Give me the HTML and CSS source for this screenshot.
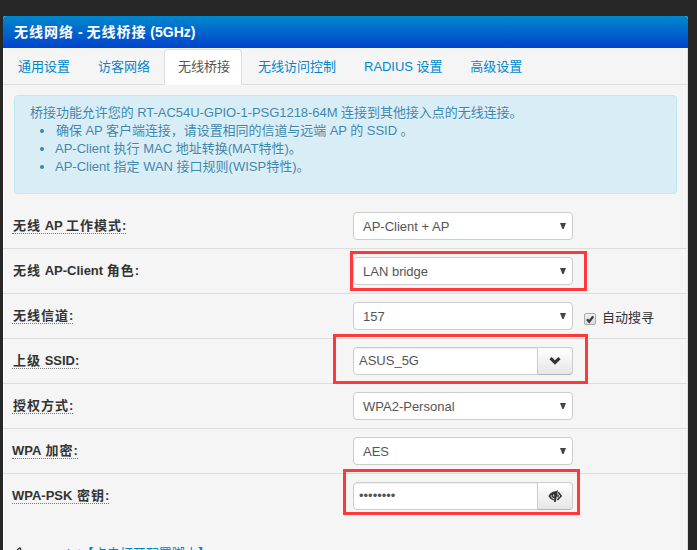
FILE: index.html
```html
<!DOCTYPE html>
<html lang="zh-CN">
<head>
<meta charset="utf-8">
<title>无线网络 - 无线桥接 (5GHz)</title>
<link rel="stylesheet" href="styles.css">
</head>
<body>
<div class="panel">
  <h1 class="title"><span class="cjk">无线网络</span> - <span class="cjk">无线桥接</span> (5GHz)</h1>
  <nav class="tabs">
    <a class="tab">通用设置</a>
    <a class="tab">访客网络</a>
    <a class="tab active">无线桥接</a>
    <a class="tab">无线访问控制</a>
    <a class="tab latin">RADIUS 设置</a>
    <a class="tab">高级设置</a>
  </nav>
  <div class="info">
    <div class="lead">桥接功能允许您的 RT-AC54U-GPIO-1-PSG1218-64M 连接到其他接入点的无线连接。</div>
    <ul>
      <li class="nudge">确保 AP 客户端连接，请设置相同的信道与远端 AP 的 SSID 。</li>
      <li>AP-Client 执行 MAC 地址转换(MAT特性)。</li>
      <li>AP-Client 指定 WAN 接口规则(WISP特性)。</li>
    </ul>
  </div>
  <div class="rows">
    <div class="row">
      <div class="name"><span class="hint"><span class="cjk">无线</span> AP <span class="cjk">工作模式</span>:</span></div>
      <div class="select">AP-Client + AP<svg class="arrow" viewBox="0 0 6 6"><path d="M0 0h6L3.6 6H2.4z"/></svg></div>
    </div>
    <div class="row">
      <div class="name"><span class="cjk">无线</span> AP-Client <span class="cjk">角色</span>:</div>
      <div class="select">LAN bridge<svg class="arrow" viewBox="0 0 6 6"><path d="M0 0h6L3.6 6H2.4z"/></svg></div>
      <div class="mark mark-role"></div>
    </div>
    <div class="row">
      <div class="name"><span class="hint"><span class="cjk">无线信道</span>:</span></div>
      <div class="select">157<svg class="arrow" viewBox="0 0 6 6"><path d="M0 0h6L3.6 6H2.4z"/></svg></div>
      <div class="auto"><span class="check"><svg viewBox="0 0 10 10"><path d="M2 5.2l2.2 2.5L8.2 2.4" fill="none" stroke="#3a3a3a" stroke-width="2.4"/></svg></span>自动搜寻</div>
    </div>
    <div class="row">
      <div class="name"><span class="hint"><span class="cjk">上级</span> SSID:</span></div>
      <div class="group"><div class="input">ASUS_5G</div><div class="btn"><svg width="14" height="14" viewBox="0 0 14 14"><path d="M1.4 5.2L3.6 3 7 6.3 10.4 3l2.2 2.2L7 10.8z" fill="#333"/></svg></div></div>
      <div class="mark mark-ssid"></div>
    </div>
    <div class="row">
      <div class="name"><span class="hint"><span class="cjk">授权方式</span>:</span></div>
      <div class="select">WPA2-Personal<svg class="arrow" viewBox="0 0 6 6"><path d="M0 0h6L3.6 6H2.4z"/></svg></div>
    </div>
    <div class="row">
      <div class="name"><span class="hint">WPA <span class="cjk">加密</span>:</span></div>
      <div class="select">AES<svg class="arrow" viewBox="0 0 6 6"><path d="M0 0h6L3.6 6H2.4z"/></svg></div>
    </div>
    <div class="row">
      <div class="name"><span class="hint">WPA-PSK <span class="cjk">密钥</span>:</span></div>
      <div class="group"><div class="input">••••••••</div><div class="btn"><svg width="14" height="14" viewBox="0 0 14 14"><path d="M8 2.2L10 1 7.8 13H6l.3-1.5C3.700 11 1.500 9.300.4 7 2 4 4.800 2.200 8 2.200z" fill="#333"/><path d="M3.200 6.300C3 8 4.200 9.400 6.500 10M5.600 5.500l.2 2" fill="none" stroke="#eee" stroke-width="1"/><path d="M10.300 3.200l2.900 3.800-3.800 4M10 5.500v2.700" fill="none" stroke="#333" stroke-width="1.500"/></svg></div></div>
      <div class="mark mark-key"></div>
    </div>
    <div class="script-row">
      <svg class="hand" width="14" height="14" viewBox="0 0 14 14"><path d="M1 6L6.500 1l1 .3.2 1.200-1.200 1.600H13v2H9v6H3L1 10z" fill="none" stroke="#333" stroke-width="1.300"/></svg>
      <a>ap_script【点击打开配置脚本】</a>
    </div>
  </div>
</div>
</body>
</html>
```

FILE: styles.css
```css
* { box-sizing: border-box; }
html, body { height: 100%; overflow: hidden; }
body {
  margin: 0;
  padding: 16px 9px 0 3px;
  background: #272727;
  color: #333;
  font: 13px/18px "Liberation Sans", "Noto Sans CJK SC", sans-serif;
}
.panel {
  height: 560px;
  background: #f5f5f5;
  border-radius: 3px 3px 0 0;
  box-shadow: inset 1px 0 #fff, inset -1px 0 #ddd;
}
.title {
  margin: 0;
  height: 32px;
  padding-left: 11px;
  border-radius: 3px 3px 0 0;
  background: linear-gradient(#0088cc, #0044cc);
  color: #fff;
  font-size: 14px;
  line-height: 32px;
  white-space: nowrap;
}
.cjk { letter-spacing: 1px; }
.tabs {
  display: flex;
  gap: 2px;
  height: 37px;
  padding: 1px 1px 0;
  border-bottom: 1px solid #ddd;
}
.tab {
  height: 36px;
  padding: 8px 12px;
  border: 1px solid transparent;
  border-bottom: 0;
  border-radius: 4px 4px 0 0;
  color: #08c;
  white-space: nowrap;
}
.tab:first-child { padding-left: 13px; }
.tab.latin { letter-spacing: -0.05px; }
.tab.active {
  margin-left: -1px;
  padding-left: 13px;
  padding-right: 11px;
  background: #fff;
  border-color: #ddd;
  color: #555;
}
.tab.active + .tab { padding-left: 13px; }
.info {
  height: 99px;
  margin: 10px 11px 9px;
  padding: 8px 15px;
  border: 1px solid #bce8f1;
  border-radius: 4px;
  background: #d9edf7;
  color: #3a87ad;
  white-space: nowrap;
  text-shadow: 0 1px 0 rgba(255,255,255,.5);
}
.info .lead { letter-spacing: -0.04px; }
.info ul { margin: 0 0 0 25px; padding: 0; }
.info .nudge { padding-left: 1px; letter-spacing: -0.05px; }
.row {
  position: relative;
  display: flex;
  height: 45px;
  padding: 8px 0 0 9px;
  border-top: 1px solid #ddd;
  margin: 0 1px 0 0;
}
.row:first-child { border-top-color: transparent; }
.name {
  width: 341px;
  padding-top: 5px;
  font-weight: bold;
  line-height: 18px;
}
.name > .cjk:first-child, .hint > .cjk:first-child { margin-left: 1px; }
.hint {
  display: inline-block;
  height: 17px;
  border-bottom: 1px dotted #777;
}
.select {
  position: relative;
  width: 220px;
  height: 28px;
  padding: 0 9px;
  border: 1px solid #ccc;
  border-radius: 4px;
  background: #fff;
  color: #555;
  line-height: 27px;
}
.arrow {
  position: absolute;
  right: 6px;
  top: 10px;
  width: 6px;
  height: 6px;
  fill: #444;
}
.auto {
  display: flex;
  gap: 6px;
  margin-left: 11px;
  padding-top: 7px;
}
.check {
  width: 12px;
  height: 12px;
  margin-top: 4px;
  border: 1px solid #aaa;
  border-radius: 2px;
  background: linear-gradient(#eee, #ddd);
}
.check svg { display: block; width: 10px; height: 10px; }
.group { display: flex; }
.input {
  width: 185px;
  height: 28px;
  padding-left: 5px;
  border: 1px solid #ccc;
  border-radius: 4px 0 0 4px;
  background: #fff;
  box-shadow: inset 0 1px 1px rgba(0,0,0,.075);
  color: #555;
  line-height: 25px;
}
.btn {
  display: flex;
  align-items: center;
  justify-content: center;
  width: 36px;
  height: 28px;
  margin-left: -1px;
  border: 1px solid #ccc;
  border-bottom-color: #b3b3b3;
  border-radius: 0 4px 4px 0;
  background: linear-gradient(#fff, #e6e6e6);
}
.mark { position: absolute; border: 3px solid #ff3939; }
.mark-role { left: 347px; top: 2px; width: 237px; height: 40px; }
.mark-ssid { left: 330px; top: -5px; width: 255px; height: 50px; z-index: 1; }
.mark-key { left: 340px; top: -5px; width: 237px; height: 46px; }
.script-row {
  display: flex;
  padding: 27px 0 0 10px;
  white-space: nowrap;
}
.hand { margin: 2px 1px 0 0; }
.script-row a { color: #08c; }
```
